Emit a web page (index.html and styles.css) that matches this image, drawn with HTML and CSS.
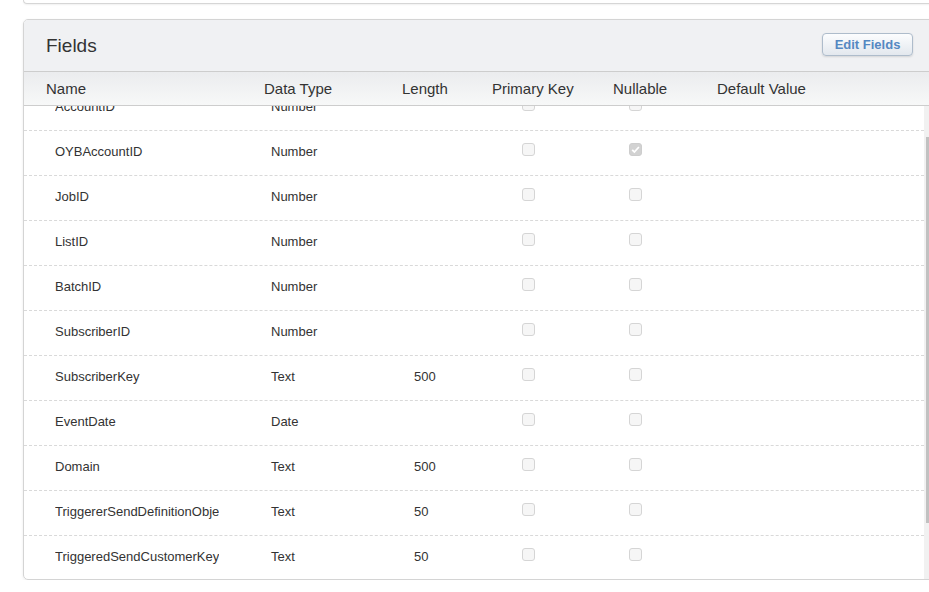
FILE: index.html
```html
<!DOCTYPE html>
<html>
<head>
<meta charset="utf-8">
<title>Fields</title>
<link rel="stylesheet" href="styles.css">
</head>
<body>
<div class="page">
  <div class="prev-card"></div>
  <section class="card">
    <header class="card-head">
      <h2 class="card-title">Fields</h2>
      <button class="btn">Edit Fields</button>
    </header>
    <div class="col-head">
      <span>Name</span>
      <span>Data Type</span>
      <span>Length</span>
      <span>Primary Key</span>
      <span>Nullable</span>
      <span>Default Value</span>
    </div>
    <div class="body">
      <div class="rows">
        <div class="row"><span class="name">AccountID</span><span>Number</span><span></span><span class="cb"></span><span class="cb"></span></div>
        <div class="row"><span class="name">OYBAccountID</span><span>Number</span><span></span><span class="cb"></span><span class="cb checked"><svg viewBox="0 0 13 13" width="13" height="13"><path d="M3.2 6.8 L5.4 9 L9.9 4" fill="none" stroke="#fff" stroke-width="1.8"/></svg></span></div>
        <div class="row"><span class="name">JobID</span><span>Number</span><span></span><span class="cb"></span><span class="cb"></span></div>
        <div class="row"><span class="name">ListID</span><span>Number</span><span></span><span class="cb"></span><span class="cb"></span></div>
        <div class="row"><span class="name">BatchID</span><span>Number</span><span></span><span class="cb"></span><span class="cb"></span></div>
        <div class="row"><span class="name">SubscriberID</span><span>Number</span><span></span><span class="cb"></span><span class="cb"></span></div>
        <div class="row"><span class="name">SubscriberKey</span><span>Text</span><span>500</span><span class="cb"></span><span class="cb"></span></div>
        <div class="row"><span class="name">EventDate</span><span>Date</span><span></span><span class="cb"></span><span class="cb"></span></div>
        <div class="row"><span class="name">Domain</span><span>Text</span><span>500</span><span class="cb"></span><span class="cb"></span></div>
        <div class="row"><span class="name">TriggererSendDefinitionObjectID</span><span>Text</span><span>50</span><span class="cb"></span><span class="cb"></span></div>
        <div class="row last"><span class="name">TriggeredSendCustomerKey</span><span>Text</span><span>50</span><span class="cb"></span><span class="cb"></span></div>
      </div>
      <div class="scrollbar"><div class="thumb"></div></div>
    </div>
  </section>
</div>
</body>
</html>
```

FILE: styles.css
```css
html, body {
  margin: 0;
  padding: 0;
  background: #fff;
  overflow: hidden;
  font-family: "Liberation Sans", Arial, sans-serif;
  color: #333;
}

.page {
  padding-left: 23px;
  width: 1000px;
}

.prev-card {
  width: 917px;
  height: 3px;
  border: 1px solid #d6d6d6;
  border-top: none;
  border-radius: 0 0 5px 5px;
  box-shadow: 0 1px 2px rgba(0, 0, 0, 0.06);
}

.card {
  margin-top: 15px;
  width: 917px;
  border: 1px solid #d4d4d4;
  border-radius: 5px;
  box-shadow: 0 1px 3px rgba(0, 0, 0, 0.08);
  overflow: hidden;
}

.card-head {
  height: 51px;
  display: flex;
  align-items: center;
  justify-content: space-between;
  padding: 0 28px 0 22px;
  background: #f0f1f3;
  border-bottom: 1px solid #cdcdcd;
}

.card-title {
  margin: 0;
  font-size: 19px;
  font-weight: normal;
  color: #333;
}

.btn {
  width: 91px;
  height: 23px;
  margin-top: -2px;
  padding: 0;
  border: 1px solid #aebccb;
  border-radius: 4px;
  background: linear-gradient(#fcfdfe, #e3e8ee);
  box-shadow: 0 1px 2px rgba(0, 0, 0, 0.12);
  font-family: "Liberation Sans", Arial, sans-serif;
  font-size: 13px;
  font-weight: bold;
  color: #5588c2;
}

.col-head {
  display: grid;
  grid-template-columns: 218px 138px 90px 121px 104px auto;
  align-items: center;
  padding-left: 22px;
  padding-bottom: 1px;
  box-sizing: border-box;
  height: 34px;
  background: linear-gradient(#ebecee, #f7f8f8);
  border-bottom: 1px solid #cdcdcd;
  font-size: 15px;
  color: #333;
}

.body {
  height: 473px;
  display: flex;
  overflow: hidden;
}

.rows {
  width: 900px;
  margin-top: -20px;
}

.row {
  height: 40px;
  padding-bottom: 4px;
  display: grid;
  grid-template-columns: 216px 143px 108px 107px 13px;
  align-items: center;
  padding-left: 31px;
  border-bottom: 1px dashed #d9d9d9;
  font-size: 13px;
  color: #333;
}

.row.last {
  border-bottom: none;
}

.name {
  width: 164px;
  overflow: hidden;
  white-space: nowrap;
}

.cb {
  width: 11px;
  height: 11px;
  align-self: start;
  margin-top: 12px;
  border: 1px solid #d5d5d5;
  border-radius: 3px;
  background: #f6f6f6;
  position: relative;
}

.cb.checked {
  background: #d2d2d2;
  border-color: #cdcdcd;
}

.cb svg {
  position: absolute;
  left: -1px;
  top: -1px;
}

.scrollbar {
  width: 17px;
  flex: none;
  background: #f1f1f1;
  padding: 31px 2px 0;
  box-sizing: border-box;
}

.thumb {
  height: 386px;
  background: #c1c1c1;
}
```
